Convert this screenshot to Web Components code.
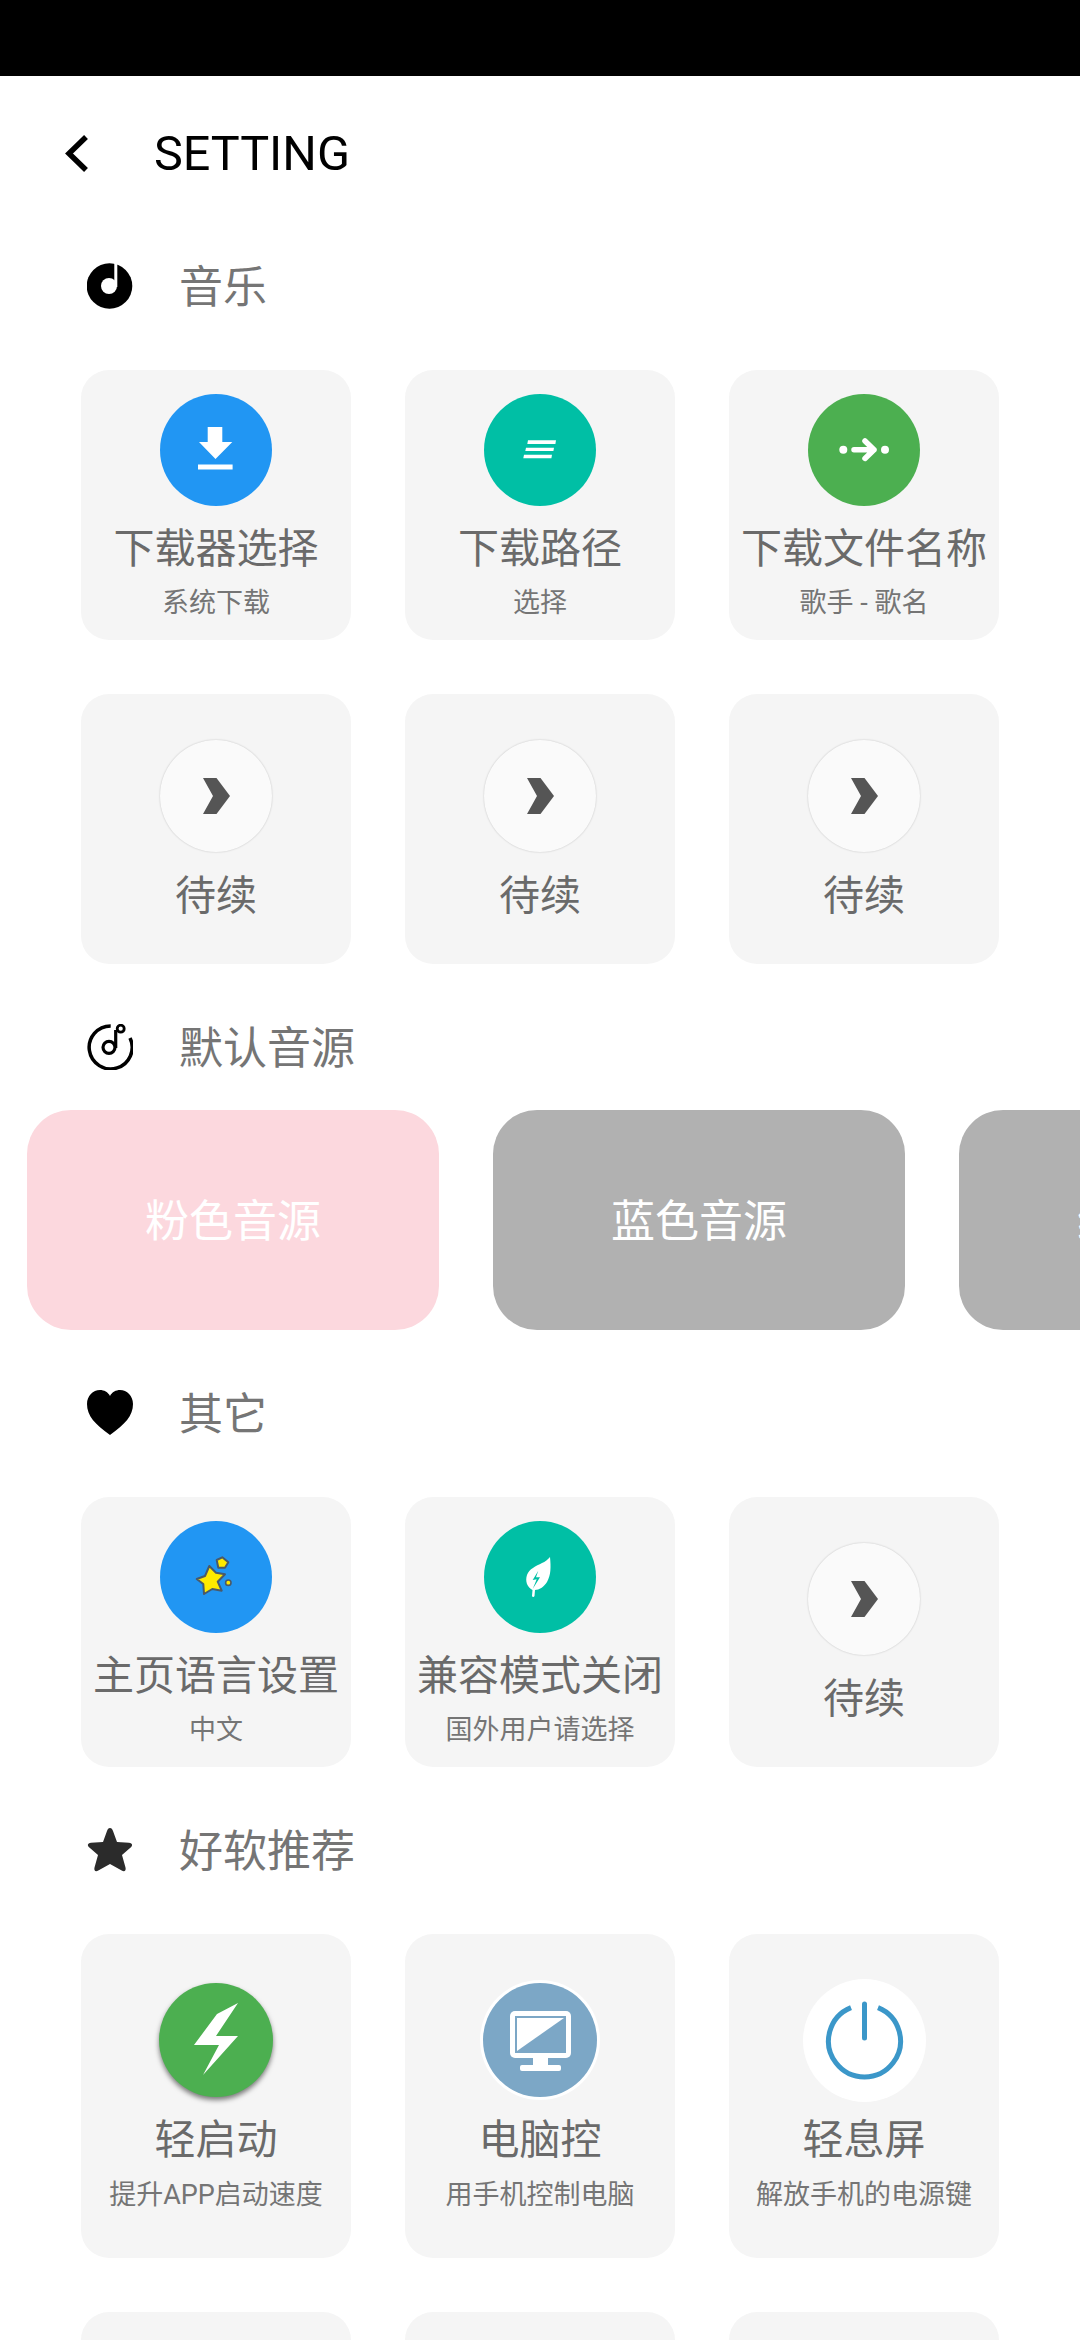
<!DOCTYPE html>
<html>
<head>
<meta charset="utf-8">
<style>
  html, body { margin: 0; padding: 0; background: #fff; }
  body { width: 1080px; height: 2340px; overflow: hidden; font-family: Roboto, "Noto Sans CJK SC", sans-serif; }
  .row { display: flex; gap: 54px; padding-left: 81px; }
  .row.low { margin-top: 54px; }
  .scroller { display: flex; gap: 54px; padding-left: 27px; width: 1080px; box-sizing: border-box; overflow: hidden; }
</style>
</head>
<body>
<status-bar></status-bar>
<top-bar>SETTING</top-bar>

<section-head name="disc" style="margin-top:31px">音乐</section-head>
<div class="row">
  <tool-card label="下载器选择" sub="系统下载"><round-icon color="#2196f3" glyph="download"></round-icon></tool-card>
  <tool-card label="下载路径" sub="选择"><round-icon color="#00bfa5" glyph="lines"></round-icon></tool-card>
  <tool-card label="下载文件名称" sub="歌手 - 歌名"><round-icon color="#4caf50" glyph="arrow"></round-icon></tool-card>
</div>
<div class="row low">
  <tool-card label="待续" pending><round-icon color="#fafafa" glyph="next" ring></round-icon></tool-card>
  <tool-card label="待续" pending><round-icon color="#fafafa" glyph="next" ring></round-icon></tool-card>
  <tool-card label="待续" pending><round-icon color="#fafafa" glyph="next" ring></round-icon></tool-card>
</div>

<section-head name="note" style="margin-top:59px">默认音源</section-head>
<div class="scroller">
  <source-button color="#fcd8de">粉色音源</source-button>
  <source-button color="#b1b1b1">蓝色音源</source-button>
  <source-button color="#b1b1b1">绿色音源</source-button>
</div>

<section-head name="heart" style="margin-top:59px">其它</section-head>
<div class="row">
  <tool-card label="主页语言设置" sub="中文"><round-icon color="#2196f3" glyph="stars"></round-icon></tool-card>
  <tool-card label="兼容模式关闭" sub="国外用户请选择"><round-icon color="#00bfa5" glyph="leaf"></round-icon></tool-card>
  <tool-card label="待续" pending><round-icon color="#fafafa" glyph="next" ring></round-icon></tool-card>
</div>

<section-head name="star" style="margin-top:59px">好软推荐</section-head>
<div class="row">
  <tool-card label="轻启动" sub="提升APP启动速度" tall><round-icon color="#4caf50" glyph="bolt" size="114" lifted></round-icon></tool-card>
  <tool-card label="电脑控" sub="用手机控制电脑" tall><round-icon color="#7ca7c6" glyph="monitor" size="114" edge></round-icon></tool-card>
  <tool-card label="轻息屏" sub="解放手机的电源键" tall><round-icon color="#fff" glyph="power" size="123"></round-icon></tool-card>
</div>
<div class="row low">
  <tool-card tall></tool-card>
  <tool-card tall></tool-card>
  <tool-card tall></tool-card>
</div>

<script>
const CJK = 'Roboto, "Noto Sans CJK SC", sans-serif';

class StatusBar extends HTMLElement {
  constructor() {
    super();
    this.attachShadow({mode: 'open'}).innerHTML = `<style>:host{display:block;height:76px;background:#000}</style>`;
  }
}
customElements.define('status-bar', StatusBar);

class TopBar extends HTMLElement {
  constructor() {
    super();
    this.attachShadow({mode: 'open'}).innerHTML = `
      <style>
        :host{display:flex;align-items:center;height:155px;padding-left:62px;font-family:${CJK}}
        svg{width:30px;height:40px;display:block}
        span{margin-left:62px;font-size:48.5px;color:#000}
      </style>
      <svg viewBox="0 0 30 40"><path d="M24 3 L7 19.500 L24 36" fill="none" stroke="#000" stroke-width="5.500"/></svg>
      <span><slot></slot></span>`;
  }
}
customElements.define('top-bar', TopBar);

const HEAD_ICONS = {
  disc: `<circle cx="22.500" cy="23" r="22.800" fill="#000"/><circle cx="22" cy="23" r="8" fill="#fff"/><rect x="27.300" y="0" width="3" height="24" fill="#fff"/>`,
  note: `<path d="M23.700 1.900A21.500 21.500 0 1 0 43 14" fill="none" stroke="#000" stroke-width="3.500"/><circle cx="22" cy="23.300" r="6" fill="none" stroke="#000" stroke-width="3.200"/><path d="M28.700 24V6" fill="none" stroke="#000" stroke-width="3.200"/><circle cx="33.700" cy="4.700" r="3.500" fill="none" stroke="#000" stroke-width="2.800"/>`,
  heart: `<path d="M23 45C8 34 0 26 0 14 0 6 6 0 13 0c4 0 8 2 10 6 2-4 6-6 10-6 7 0 13 6 13 14 0 12-8 20-23 31z" fill="#000"/>`,
  star: `<path d="M23 1c1.500 0 2.300 1 3 3l4 11 12 .8c3 .2 4 2.200 2.200 4.200L35 28l3.500 12.500c.8 3.200-1.200 4.700-3.800 3L23 37l-11.700 6.500c-2.600 1.700-4.600.2-3.800-3L11 28 1.800 20C0 18 1 16 4 15.800L16 15l4-11c.7-2 1.500-3 3-3z" fill="#2b2b2b"/>`
};

class SectionHead extends HTMLElement {
  constructor() {
    super();
    this.attachShadow({mode: 'open'}).innerHTML = `
      <style>
        :host{display:flex;align-items:center;height:48px;padding-left:87px;font-family:${CJK}}
        svg{width:46px;height:46px;display:block;flex:none}
        span{margin:4px 0 0 46px;font-size:44px;line-height:48px;color:#757575}
      </style>
      <svg viewBox="0 0 46 46"></svg>
      <span><slot></slot></span>`;
  }
  connectedCallback() {
    this.shadowRoot.querySelector('svg').innerHTML = HEAD_ICONS[this.getAttribute('name')];
    this.style.marginBottom = this.getAttribute('name') == 'note' ? '39px' : '60px';
  }
}
customElements.define('section-head', SectionHead);

const GLYPHS = {
  download: `<path d="M47.700 33h14.600v15h10L55.500 65 39 48h8.700z" fill="#fff"/><rect x="38" y="70.500" width="34.600" height="5" fill="#fff"/>`,
  lines: `<path d="M44 46.300h28l-.6 3.700H43.300zM42 53.700h28l-.6 3.300H41.300zM40 60.700h28l-.6 3.600H39.300z" fill="#fff"/>`,
  arrow: `<circle cx="35.300" cy="55.700" r="4" fill="#fff"/><circle cx="77" cy="55.700" r="4" fill="#fff"/><path d="M46 55.700h20M57 47l9 8.700-9 8.700" fill="none" stroke="#fff" stroke-width="5.500" stroke-linecap="round" stroke-linejoin="round"/>`,
  next: `<path d="M43 38h13.500L70 56 56.500 74H43l10-18z" fill="#555"/>`,
  stars: `<path d="M49.300 45L56 51.700 65 53.300 57.700 60.700 61.700 69.700 52.300 68 44 73 43.300 63 36.700 58 45 55z" fill="#ffea00" stroke="#4a5a6a" stroke-width="2" stroke-linejoin="round"/><path d="M62.300 36.300L68.300 41.300 65 46.700 58.300 46.700 56.700 39z" fill="#ffea00" stroke="#4a5a6a" stroke-width="2" stroke-linejoin="round"/><circle cx="68.300" cy="61.700" r="2.700" fill="#ffea00" stroke="#4a5a6a" stroke-width="1.600"/>`,
  leaf: `<path d="M66 36C67 46 67 54 63 61C60 66 55 69 51 69L50.500 75C50 76.500 48 76 48 75L48.500 69C43 66 41 60 43 54C45 48 52 45 58 42C61 41 64 38 66 36z" fill="#fff"/><path d="M54.300 49.700L48.700 59 52.700 58.300 48.700 68 56 56.300 52 56.300z" fill="#00bfa5"/>`,
  bolt: `<path d="M79 20L58 31 35 62H60L44 92 79 53H57z" fill="#fff"/>`,
  monitor: `<rect x="27" y="28" width="61" height="47" rx="5" fill="#fff"/><rect x="32" y="33" width="51" height="37" fill="#7ca7c6"/><path d="M34 35H81L34 68z" fill="#fff"/><rect x="50" y="75" width="15" height="8" fill="#fff"/><rect x="37" y="82" width="41" height="6" rx="2" fill="#fff"/>`,
  power: `<path d="M48 28.600A36 36 0 1 0 75 28.600" fill="none" stroke="#3b97c9" stroke-width="5"/><path d="M61.500 25v34" fill="none" stroke="#3b97c9" stroke-width="5" stroke-linecap="round"/>`
};

class RoundIcon extends HTMLElement {
  constructor() {
    super();
    this.attachShadow({mode: 'open'}).innerHTML = `
      <style>
        :host{display:block;border-radius:50%;box-sizing:border-box}
        svg{display:block;width:100%;height:100%}
      </style>
      <svg></svg>`;
  }
  connectedCallback() {
    const size = this.getAttribute('size') || 112;
    this.style.width = this.style.height = size + 'px';
    this.style.background = this.getAttribute('color');
    if (this.hasAttribute('ring')) this.style.boxShadow = '0 0 2px rgba(0,0,0,.22)';
    if (this.hasAttribute('lifted')) this.style.boxShadow = '0 3px 5px rgba(0,0,0,.5)';
    if (this.hasAttribute('edge')) this.style.boxShadow = '0 0 0 3px #fff';
    const svg = this.shadowRoot.querySelector('svg');
    svg.setAttribute('viewBox', `0 0 ${size} ${size}`);
    svg.innerHTML = GLYPHS[this.getAttribute('glyph')];
  }
}
customElements.define('round-icon', RoundIcon);

class ToolCard extends HTMLElement {
  constructor() {
    super();
    this.attachShadow({mode: 'open'}).innerHTML = `
      <style>
        :host{display:flex;flex-direction:column;align-items:center;box-sizing:border-box;width:270px;height:270px;padding-top:24px;
          background:#f5f5f5;border-radius:28px;font-family:${CJK};white-space:nowrap}
        :host([pending]){padding-top:46px}
        :host([tall]){height:324px}
        .icon{display:flex;align-items:center;justify-content:center;height:112px}
        :host([tall]) .icon{height:124px;margin-top:20px}
        .label{margin-top:15px;font-size:41px;line-height:56px;color:#6a6a6a}
        :host([pending]) .label{margin-top:16px}
        :host([tall]) .label{margin-top:10px}
        .sub{margin-top:8px;font-size:27px;line-height:36px;color:#757575}
        :host([tall]) .sub{margin-top:9px}
      </style>
      <div class="icon"><slot></slot></div>
      <div class="label"></div>
      <div class="sub"></div>`;
  }
  connectedCallback() {
    this.shadowRoot.querySelector('.label').textContent = this.getAttribute('label') || '';
    const sub = this.shadowRoot.querySelector('.sub');
    sub.textContent = this.getAttribute('sub') || '';
    if (!this.hasAttribute('sub')) sub.remove();
  }
}
customElements.define('tool-card', ToolCard);

class SourceButton extends HTMLElement {
  constructor() {
    super();
    this.attachShadow({mode: 'open'}).innerHTML = `
      <style>
        :host{display:flex;align-items:center;justify-content:center;flex:none;width:412px;height:216px;padding-bottom:4px;border-radius:44px;
          color:#fff;font-family:${CJK};font-size:44px}
      </style>
      <slot></slot>`;
  }
  connectedCallback() {
    this.style.background = this.getAttribute('color');
  }
}
customElements.define('source-button', SourceButton);
</script>
</body>
</html>
